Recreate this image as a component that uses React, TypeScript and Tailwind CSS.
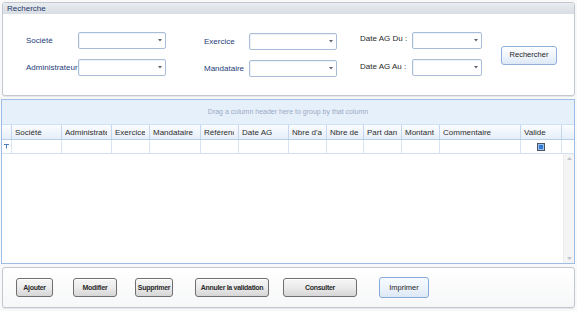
import React from 'react';

const font = { fontFamily: '"Liberation Sans", Arial, sans-serif' };

const COLUMNS = [
  { label: 'Société', w: 'w-[50px]' },
  { label: 'Administrateur', w: 'w-[50px]' },
  { label: 'Exercice', w: 'w-[38px]' },
  { label: 'Mandataire', w: 'w-[51px]' },
  { label: 'Référence', w: 'w-[38px]' },
  { label: 'Date AG', w: 'w-[50px]' },
  { label: "Nbre d'actions", w: 'w-[38px]' },
  { label: 'Nbre de voix', w: 'w-[37px]' },
  { label: 'Part dans le capital', w: 'w-[38px]' },
  { label: 'Montant', w: 'w-[38px]' },
  { label: 'Commentaire', w: 'w-[81px]' },
  { label: 'Valide', w: 'w-[41px]' },
];

const Combo = ({ w }: { w: string }) => (
  <div className={`${w} h-[17px] bg-white border border-[#a9bcd8] rounded-[2px] flex items-center justify-end pr-[3px] shadow-[inset_1px_1px_0_#eef3fa]`}>
    <svg width="4" height="3" viewBox="0 0 4 3">
      <path d="M0 0h4L2 2.5z" fill="#5a6270" />
    </svg>
  </div>
);

const Label = ({ text, w, cls = '' }: { text: string; w: string; cls?: string }) => (
  <span className={`${w} text-[8px] leading-none whitespace-nowrap ${cls}`}>{text}</span>
);

const GrayButton = ({ text, w, cls = '' }: { text: string; w: string; cls?: string }) => (
  <button
    className={`${w} h-[19px] ${cls} rounded-[3px] border border-[#6f6f6f] bg-gradient-to-b from-[#f6f6f6] via-[#ebebeb] to-[#d6d6d6] text-[7px] font-bold tracking-[-0.3px] whitespace-nowrap text-[#2b2b2b] leading-none shadow-[inset_0_1px_0_#ffffff]`}
  >
    {text}
  </button>
);

export default function App() {
  return (
    <div className="w-[577px] h-[311px] bg-[#f9f9fa] overflow-hidden pt-[2px] flex flex-col" style={font}>
      {/* Recherche */}
      <div className="mx-[2px] w-[573px] h-[94px] border border-[#c3c8cf] rounded-[3px] bg-white flex flex-col overflow-hidden shadow-[0_1px_1px_#e2e4e8]">
        <div className="h-[11px] bg-gradient-to-b from-[#e9ecf0] to-[#d8dde4] text-[8px] leading-[11px] text-[#1c3766] pl-[4px]">
          Recherche
        </div>
        <div className="flex items-center pl-[23px] pt-[18px]">
          <div className="grid grid-rows-[17px_17px] gap-y-[10px]">
            <div className="flex items-center">
              <Label text="Société" w="w-[52px]" cls="text-[#25407a]" />
              <Combo w="w-[88px]" />
            </div>
            <div className="flex items-center">
              <Label text="Administrateur" w="w-[52px]" cls="text-[#25407a]" />
              <Combo w="w-[88px]" />
            </div>
          </div>
          <div className="grid grid-rows-[17px_17px] gap-y-[10px] ml-[38px]">
            <div className="flex items-center pt-[2px]">
              <Label text="Exercice" w="w-[45px]" cls="text-[#25407a]" />
              <Combo w="w-[88px]" />
            </div>
            <div className="flex items-center pt-[2px]">
              <Label text="Mandataire" w="w-[45px]" cls="text-[#25407a]" />
              <Combo w="w-[88px]" />
            </div>
          </div>
          <div className="grid grid-rows-[17px_17px] gap-y-[10px] ml-[23px]">
            <div className="flex items-center">
              <Label text="Date AG Du :" w="w-[52px]" cls="text-[#2a2a2a] -mt-[3px]" />
              <Combo w="w-[70px]" />
            </div>
            <div className="flex items-center">
              <Label text="Date AG Au :" w="w-[52px]" cls="text-[#2a2a2a] -mt-[2px]" />
              <Combo w="w-[70px]" />
            </div>
          </div>
          <button className="ml-[19px] mt-[2px] w-[56px] h-[19px] rounded-[3px] border border-[#8fb0d9] bg-gradient-to-b from-[#fdfeff] via-[#f0f5fc] to-[#dde8f6] text-[7.5px] text-[#1f1f1f] leading-none">
            Rechercher
          </button>
        </div>
      </div>

      {/* Grid */}
      <div className="mt-[3px] ml-[1px] w-[574px] h-[165px] border border-[#9dbde6] bg-white flex flex-col overflow-hidden">
        <div className="h-[25px] bg-[#e6f0fb] border-b border-[#cfdff2] flex items-center justify-center text-[7px] text-[#9aaac4]">
          Drag a column header here to group by that column
        </div>
        <div className="h-[15px] flex bg-gradient-to-b from-[#fbfdff] to-[#e5eef9] border-b border-[#b9cde8]">
          <div className="w-[10px] border-r border-[#c6d6ec]" />
          {COLUMNS.map((c) => (
            <div key={c.label} className={`${c.w} shrink-0 border-r border-[#c6d6ec] pl-[3px] pr-[4px]`}>
              <div className="overflow-hidden whitespace-nowrap text-[8px] leading-[15px] text-[#2e2e2e]">
                {c.label}
              </div>
            </div>
          ))}
          <div className="flex-1" />
        </div>
        <div className="h-[14px] flex border-b border-[#d3e0f1]">
          <div className="w-[10px] border-r border-[#d9e4f2] flex items-center justify-center">
            <svg width="5" height="5" viewBox="0 0 5 5">
              <path d="M0 0.5h5M2.5 0.5v4" stroke="#4a7fc4" strokeWidth="1" />
            </svg>
          </div>
          {COLUMNS.map((c) => (
            <div key={c.label} className={`${c.w} shrink-0 border-r border-[#d9e4f2] flex items-center justify-center`}>
              {c.label === 'Valide' && (
                <div className="w-[8px] h-[8px] border border-[#4b5563] bg-[#9cc3ef] p-[1px]">
                  <div className="w-full h-full bg-[#2f7bd6]" />
                </div>
              )}
            </div>
          ))}
          <div className="flex-1" />
        </div>
        <div className="flex-1 flex justify-end">
          <div className="w-[11px] bg-[#f4f4f4] border-l border-[#ececec] flex flex-col items-center justify-between py-[3px]">
            <svg width="5" height="3" viewBox="0 0 5 3">
              <path d="M0 3L2.5 0L5 3z" fill="#c0c4ca" />
            </svg>
            <svg width="5" height="3" viewBox="0 0 5 3">
              <path d="M0 0h5L2.5 3z" fill="#c0c4ca" />
            </svg>
          </div>
        </div>
      </div>

      {/* Actions */}
      <div className="mt-[3px] mx-[2px] w-[573px] h-[41px] border border-[#c3c8cf] rounded-[3px] bg-gradient-to-b from-[#ffffff] to-[#f6f7f8] flex items-center pl-[13px] shadow-[0_1px_1px_#e2e4e8]">
        <GrayButton text="Ajouter" w="w-[37px]" />
        <GrayButton text="Modifier" w="w-[44px]" cls="ml-[20px]" />
        <GrayButton text="Supprimer" w="w-[38px]" cls="ml-[18px]" />
        <GrayButton text="Annuler la validation" w="w-[74px]" cls="ml-[22px]" />
        <GrayButton text="Consulter" w="w-[74px]" cls="ml-[14px]" />
        <button className="ml-[22px] w-[50px] h-[21px] rounded-[3px] border border-[#87abd8] bg-gradient-to-b from-[#f7fbff] via-[#edf4fc] to-[#dce8f6] text-[7.5px] text-[#1f1f1f] leading-none">
          Imprimer
        </button>
      </div>
    </div>
  );
}
